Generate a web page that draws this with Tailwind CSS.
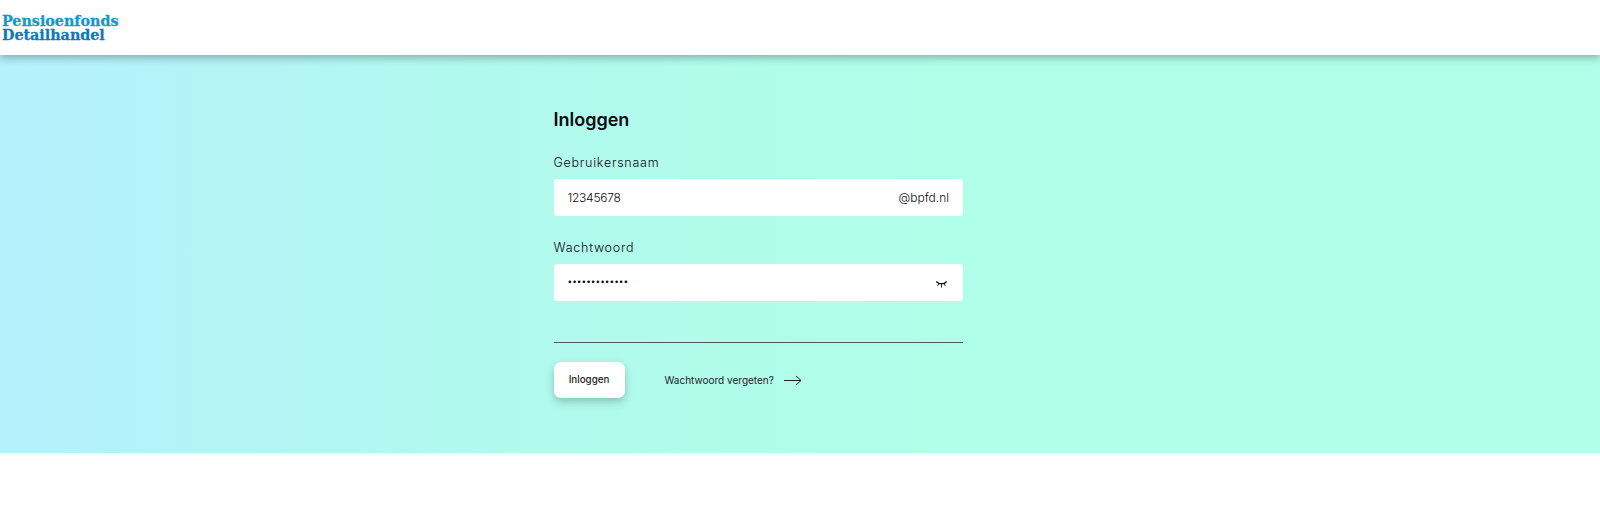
<!DOCTYPE html>
<html lang="en">
<head>
    <meta charset="UTF-8">
    <meta name="viewport" content="width=device-width, initial-scale=1.0">
    <title>Inloggen</title>
    <script src="https://cdn.jsdelivr.net/npm/@tailwindcss/browser@4"></script>
</head>
<body class="bg-white h-[505px] overflow-hidden flex flex-col font-['Inter',sans-serif] text-[#0b0b0f]">
    <header class="h-[55px] bg-white pl-[2px] pt-[14px] relative z-10 shadow-[0_3px_8px_rgba(0,0,0,0.28)]">
        <div class="font-['DejaVu_Serif',serif] font-bold text-[14.3px] leading-[14px] [-webkit-text-stroke:0.3px]">
            <div class="text-[#1598cc]">Pensioenfonds</div>
            <div class="text-[#0b7cb8]">Detailhandel</div>
        </div>
    </header>
    <main class="h-[398px] bg-gradient-to-r from-[#b5f0fd] via-[#b1f9ee] via-30% to-[#b0ffe8] to-60% pl-[553.5px]">
        <div class="w-[409.5px] pt-[52px]">
            <h1 class="text-[18px] leading-[26px] font-semibold">Inloggen</h1>
            <label class="block mt-[21px] text-[12.5px] leading-[18px] tracking-[0.75px] font-light">Gebruikersnaam</label>
            <div class="mt-[7px] h-[37px] bg-white rounded-[3px] flex items-center justify-between pl-[14px] pr-[14px]">
                <span class="text-[12px] tracking-[-0.25px] font-light">12345678</span>
                <span class="text-[12px] font-light">@bpfd.nl</span>
            </div>
            <label class="block mt-[23px] text-[12.5px] leading-[18px] tracking-[0.75px] font-light">Wachtwoord</label>
            <div class="mt-[7px] h-[37px] bg-white rounded-[3px] flex items-center justify-between pl-[14px] pr-[16px]">
                <span class="text-[8.3px] leading-none mb-[2px]">•••••••••••••</span>
                <svg class="w-[11px] h-[7px] mt-[4px]" viewBox="0 0 11 7" fill="none" stroke="#111" stroke-width="1.3">
                    <path d="M0.3 0.6L3 2.6H8L10.7 0.6"/>
                    <path d="M2.6 3L1.6 5M5.5 3V6.6M8.4 3L9.4 5" stroke-width="0.9"/>
                </svg>
            </div>
            <div class="mt-[41px] border-t border-[#4a5a60]"></div>
            <div class="mt-[19px] flex items-center">
                <button class="w-[71px] h-[36px] bg-white rounded-[7px] text-[9.8px] font-medium text-[#222] shadow-[0_4px_8px_rgba(0,0,0,0.22)]">Inloggen</button>
                <span class="ml-[40px] text-[10px] text-[#222]">Wachtwoord vergeten?</span>
                <svg class="ml-[10px] w-[18px] h-[11px]" viewBox="0 0 18 11" fill="none" stroke="#222" stroke-width="1">
                    <path d="M0 5.5H17M12 1L17 5.5L12 10"/>
                </svg>
            </div>
        </div>
    </main>
</body>
</html>
